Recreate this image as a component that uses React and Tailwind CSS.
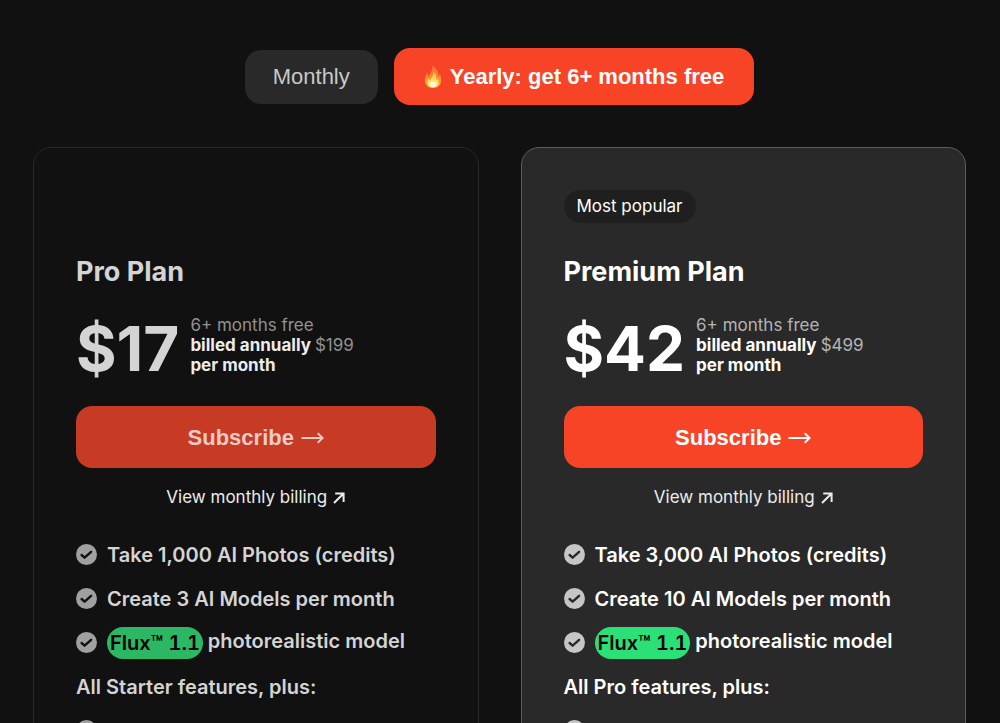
import { useState } from 'react'
import clsx from 'clsx'

const PLANS = [
  {
    id: 'pro',
    name: 'Pro Plan',
    price: '$17',
    yearly: '$199',
    photos: '1,000',
    models: 3,
    includes: 'All Starter features, plus:',
  },
  {
    id: 'premium',
    name: 'Premium Plan',
    price: '$42',
    yearly: '$499',
    photos: '3,000',
    models: 10,
    includes: 'All Pro features, plus:',
    popular: true,
  },
]

function Flame() {
  return (
    <svg viewBox="0 0 18 24" className="h-6 w-[18px] shrink-0" aria-hidden="true">
      <defs>
        <linearGradient id="flame" x1="0" y1="0" x2="0" y2="1">
          <stop offset="0%" stopColor="#f2703a" />
          <stop offset="45%" stopColor="#f98a2c" />
          <stop offset="100%" stopColor="#fbb02d" />
        </linearGradient>
        <linearGradient id="flame-core" x1="0" y1="0" x2="0" y2="1">
          <stop offset="0%" stopColor="#fcb545" />
          <stop offset="60%" stopColor="#fde06a" />
          <stop offset="100%" stopColor="#fff3b0" />
        </linearGradient>
      </defs>
      <path
        fill="url(#flame)"
        d="M8.200.8c.5 3-.3 5-1.700 7.200-.8 1.300-1.300 2.300-1.300 3.400C4.200 10.600 3.500 9.400 3.400 7.600 1.700 10 .8 12.600.8 15.400c0 4.500 3.400 7.600 8.200 7.600s8.200-3.100 8.200-7.600c0-2.400-.6-4.600-1.500-6.600-.1 1.300-.5 2.300-1.200 2.900.2-4.500-2-8.900-6.300-10.900z"
      />
      <path
        fill="url(#flame-core)"
        d="M9.400 6.500c.4 2.900-.8 4.800-2.100 6.600-.5.700-.9 1.400-1 2.200-.8-.4-1.300-1.100-1.500-2-.9 1.200-1.400 2.400-1.400 3.900 0 3.100 2.400 5.200 5.600 5.200s5.600-2.100 5.600-5.200c0-1.500-.4-2.800-1.100-3.900-.2.800-.6 1.400-1.200 1.700.1-3.300-.6-6.600-2.900-8.500z"
      />
      <ellipse cx="9" cy="19.200" rx="3" ry="2.800" fill="#fffad6" />
    </svg>
  )
}

function ArrowRight() {
  return (
    <svg viewBox="0 0 24 14" className="h-3.5 w-6 shrink-0" fill="none" stroke="currentColor" strokeWidth="1.9" aria-hidden="true">
      <path d="M1.500 8h21M17.700 3.200 22.700 8l-5 4.800" />
    </svg>
  )
}

function ArrowUpRight() {
  return (
    <svg viewBox="0 0 12 12" className="size-3 shrink-0" fill="none" stroke="currentColor" strokeWidth="2" aria-hidden="true">
      <path d="M1 11 10.300 1.700M2.200 1.500h8.400v8.400" />
    </svg>
  )
}

function Check({ popular }) {
  return (
    <svg viewBox="0 0 21 21" className="size-[21px] shrink-0" aria-hidden="true">
      <circle cx="10.500" cy="10.500" r="10.500" fill={popular ? '#c6c6c6' : '#a0a0a0'} />
      <path d="m5.600 11 3 2.700 6.500-5.900" fill="none" stroke={popular ? '#292929' : '#111111'} strokeWidth="2.400" strokeLinecap="round" strokeLinejoin="round" />
    </svg>
  )
}

function PlanCard({ plan }) {
  const { popular } = plan

  return (
    <section
      className={clsx(
        'rounded-[18px] border px-[42px] pt-[42px] pb-10',
        popular ? 'border-[#5c5c5c] bg-[#292929] text-white' : 'border-[#292929] bg-[#111111] text-[#d4d4d4]'
      )}
    >
      <div className="h-[33px]">
        {popular && (
          <span className="inline-flex h-full items-center rounded-full bg-[#1f1f1f] px-[13px] text-[17px]">Most popular</span>
        )}
      </div>

      <h2 className="mt-[33px] text-[27px] leading-8 font-bold">{plan.name}</h2>

      <div className="mt-7 flex h-[66px] items-center gap-[11px]">
        <span className="text-[62px] leading-none font-bold">{plan.price}</span>
        <p className={clsx('mb-2 text-[17px] leading-5 font-bold whitespace-nowrap', popular ? 'text-white' : 'text-[#ececec]')}>
          <span className={clsx('font-normal', popular ? 'text-[#b4b4b4]' : 'text-[#929292]')}>6+ months free</span>
          <br />
          billed annually{' '}
          <span className={clsx('font-normal', popular ? 'text-[#b4b4b4]' : 'text-[#929292]')}>{plan.yearly}</span>
          <br />
          per month
        </p>
      </div>

      <button
        type="button"
        className={clsx(
          "mt-6 flex h-[62px] w-full items-center justify-center gap-1.5 rounded-2xl font-['Liberation_Sans',Arial,sans-serif] text-[22px] font-bold",
          popular ? 'bg-[#f74426] text-white' : 'bg-[#c73a24] text-[#eacac5]'
        )}
      >
        Subscribe <ArrowRight />
      </button>

      <a href="#monthly" className="mt-[17px] flex items-center justify-center gap-1.5 text-[17px] text-[#ececec]">
        View monthly billing <ArrowUpRight />
      </a>

      <ul className="mt-7 space-y-3 text-[20px] leading-8 font-semibold whitespace-nowrap">
        <li className="flex items-center gap-2.5">
          <Check popular={popular} />
          Take {plan.photos} AI Photos (credits)
        </li>
        <li className="flex items-center gap-2.5">
          <Check popular={popular} />
          Create {plan.models} AI Models per month
        </li>
        <li className="flex items-center gap-2.5">
          <Check popular={popular} />
          <span className="flex gap-[5px]">
            <mark className={clsx('rounded-full px-[3px] text-black tabular-nums', popular ? 'bg-[#2be076]' : 'bg-[#2bb763]')}>Flux™ 1.1</mark>
            <span className="leading-7">photorealistic model</span>
          </span>
        </li>
        <li>{plan.includes}</li>
        <li className="flex h-8 items-center">
          <Check popular={popular} />
        </li>
      </ul>
    </section>
  )
}

export default function App() {
  const [billing, setBilling] = useState('yearly')

  return (
    <main className="h-screen overflow-hidden bg-[#111111] pt-12 pr-[34px] pl-[33px] font-['Inter',sans-serif]">
      <div className="flex items-center justify-center gap-4 font-['Liberation_Sans',Arial,sans-serif] text-[22px]">
        <button
          type="button"
          aria-pressed={billing === 'monthly'}
          onClick={() => setBilling('monthly')}
          className="h-[54px] rounded-2xl bg-[#292929] px-7 text-[#c8c8c8]"
        >
          Monthly
        </button>
        <button
          type="button"
          aria-pressed={billing === 'yearly'}
          onClick={() => setBilling('yearly')}
          className="flex h-[57px] items-center gap-2 rounded-2xl bg-[#f74426] px-[30px] font-bold text-white"
        >
          <Flame /> Yearly: get 6+ months free
        </button>
      </div>

      <div className="mt-[42px] grid grid-cols-2 gap-[42px]">
        {PLANS.map(plan => (
          <PlanCard key={plan.id} plan={plan} />
        ))}
      </div>
    </main>
  )
}
